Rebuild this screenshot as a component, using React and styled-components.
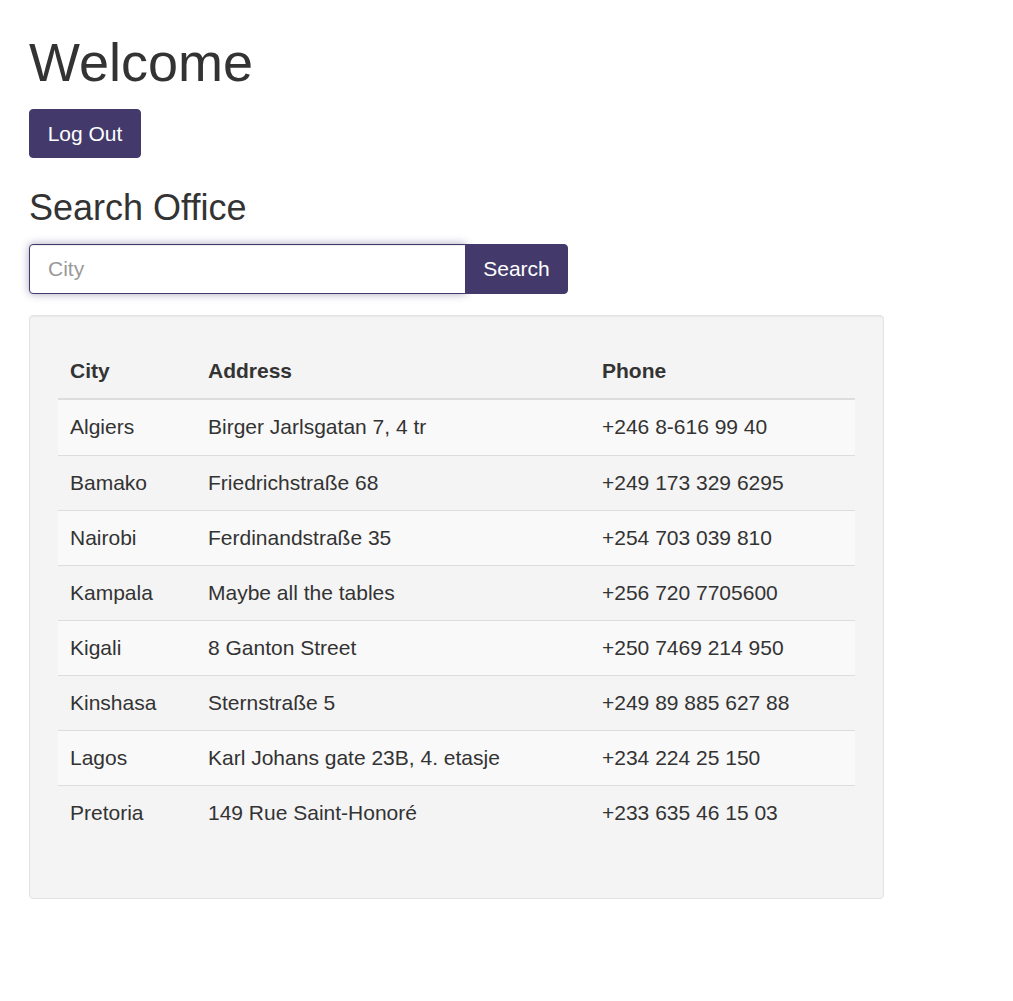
import React from 'react';
import styled, { createGlobalStyle } from 'styled-components';

const GlobalStyle = createGlobalStyle`
  * { box-sizing: border-box; }
  body {
    margin: 0;
    font-family: "Liberation Sans", Arial, sans-serif;
    font-size: 21px;
    color: #333;
    background: #fff;
  }
`;

const Page = styled.div`
  padding: 33px 0 0 29px;
  width: 884px;
`;

const Title = styled.h1`
  margin: 0;
  font-size: 54px;
  font-weight: 400;
  line-height: 1.1;
`;

const Button = styled.button`
  height: 49px;
  padding: 0 16px;
  border: 1px solid #433a6b;
  border-radius: 4px;
  background-color: #433a6b;
  color: #fff;
  font-family: "Liberation Sans", Arial, sans-serif;
  font-size: 21px;
  white-space: nowrap;
  cursor: pointer;
  &:hover {
    background-color: #362f58;
  }
`;

const LogOut = styled(Button)`
  display: block;
  margin-top: 17px;
  width: 112px;
`;

const SubTitle = styled.h3`
  margin: 30px 0 0;
  font-size: 36px;
  font-weight: 400;
  line-height: 1.1;
`;

const SearchGroup = styled.form`
  display: flex;
  margin-top: 16px;
  width: 539px;
  height: 50px;
`;

const CityInput = styled.input`
  flex: 0 0 437px;
  width: 437px;
  height: 50px;
  padding: 0 18px;
  border: 1px solid #433a6b;
  border-radius: 4px 0 0 4px;
  font-family: "Liberation Sans", Arial, sans-serif;
  font-size: 21px;
  color: #555;
  outline: 0;
  box-shadow: inset 0 1px 1px rgba(0, 0, 0, 0.075), 0 0 9px rgba(67, 58, 107, 0.45);
  &::placeholder {
    color: #999;
  }
`;

const SearchButton = styled(Button)`
  flex: 0 0 103px;
  width: 103px;
  height: 50px;
  padding: 0;
  margin-left: -1px;
  border-radius: 0 4px 4px 0;
  position: relative;
`;

const Well = styled.div`
  margin-top: 21px;
  padding: 28px 28px 28px;
  background-color: #f4f4f4;
  border: 1px solid #e3e3e3;
  border-radius: 4px;
  box-shadow: inset 0 1px 1px rgba(0, 0, 0, 0.05);
`;

const Table = styled.table`
  width: 100%;
  border-collapse: separate;
  border-spacing: 0;
  margin-bottom: 30px;
`;

const Th = styled.th`
  width: ${p => p.w || 'auto'};
  padding: 12px;
  text-align: left;
  font-weight: 700;
  line-height: 30px;
  border-bottom: 2px solid #ddd;
`;

const Row = styled.tr`
  background-color: ${p => (p.odd ? '#f9f9f9' : 'transparent')};
`;

const Td = styled.td`
  padding: 12px;
  line-height: 30px;
  white-space: nowrap;
  border-top: 1px solid #ddd;
  tr:first-child > & {
    border-top: 0;
    padding-bottom: 13px;
  }
`;

const offices = [
  ['Algiers', 'Birger Jarlsgatan 7, 4 tr', '+246 8-616 99 40'],
  ['Bamako', 'Friedrichstraße 68', '+249 173 329 6295'],
  ['Nairobi', 'Ferdinandstraße 35', '+254 703 039 810'],
  ['Kampala', 'Maybe all the tables', '+256 720 7705600'],
  ['Kigali', '8 Ganton Street', '+250 7469 214 950'],
  ['Kinshasa', 'Sternstraße 5', '+249 89 885 627 88'],
  ['Lagos', 'Karl Johans gate 23B, 4. etasje', '+234 224 25 150'],
  ['Pretoria', '149 Rue Saint-Honoré', '+233 635 46 15 03'],
];

export default function App() {
  return (
    <>
      <GlobalStyle />
      <Page>
        <Title>Welcome</Title>
        <LogOut type="button">Log Out</LogOut>
        <SubTitle>Search Office</SubTitle>
        <SearchGroup onSubmit={e => e.preventDefault()}>
          <CityInput type="text" placeholder="City" autoFocus />
          <SearchButton type="submit">Search</SearchButton>
        </SearchGroup>
        <Well>
          <Table>
            <thead>
              <tr>
                <Th w="138px">City</Th>
                <Th w="394px">Address</Th>
                <Th>Phone</Th>
              </tr>
            </thead>
            <tbody>
              {offices.map(([city, address, phone], i) => (
                <Row key={city} odd={i % 2 === 0}>
                  <Td>{city}</Td>
                  <Td>{address}</Td>
                  <Td>{phone}</Td>
                </Row>
              ))}
            </tbody>
          </Table>
        </Well>
      </Page>
    </>
  );
}
